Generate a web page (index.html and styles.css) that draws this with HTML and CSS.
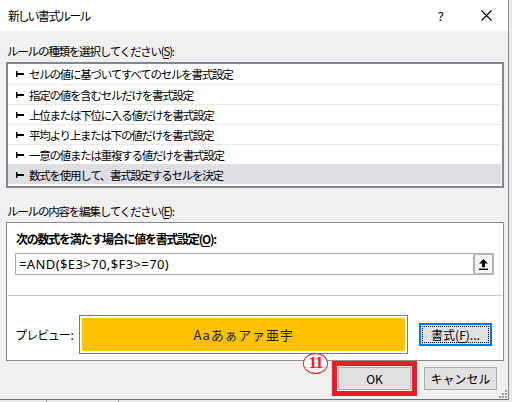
FILE: index.html
```html
<!DOCTYPE html>
<html lang="ja">
<head>
<meta charset="utf-8">
<title>新しい書式ルール</title>
<link rel="stylesheet" href="styles.css">
</head>
<body>
<div class="screen">
  <div class="dialog">
    <div class="titlebar">
      <span class="title">新しい書式ルール</span>
      <span class="help">?</span>
      <svg class="close" width="11" height="11" viewBox="0 0 11 11"><path d="M0.5 0.5L10.5 10.5M10.5 0.5L0.5 10.5" stroke="#000" stroke-width="1.1" fill="none"/></svg>
    </div>
    <div class="content">
      <div class="label label-first">ルールの種類を選択してください(<u>S</u>):</div>
      <ul class="rules">
        <li><svg class="mark" width="8" height="6" viewBox="0 0 8 6"><path d="M0 0h1.4v6H0zM1.4 2h6.6v2H1.4z" fill="#000"/></svg>セルの値に基づいてすべてのセルを書式設定</li>
        <li><svg class="mark" width="8" height="6" viewBox="0 0 8 6"><path d="M0 0h1.4v6H0zM1.4 2h6.6v2H1.4z" fill="#000"/></svg>指定の値を含むセルだけを書式設定</li>
        <li><svg class="mark" width="8" height="6" viewBox="0 0 8 6"><path d="M0 0h1.4v6H0zM1.4 2h6.6v2H1.4z" fill="#000"/></svg>上位または下位に入る値だけを書式設定</li>
        <li><svg class="mark" width="8" height="6" viewBox="0 0 8 6"><path d="M0 0h1.4v6H0zM1.4 2h6.6v2H1.4z" fill="#000"/></svg>平均より上または下の値だけを書式設定</li>
        <li><svg class="mark" width="8" height="6" viewBox="0 0 8 6"><path d="M0 0h1.4v6H0zM1.4 2h6.6v2H1.4z" fill="#000"/></svg>一意の値または重複する値だけを書式設定</li>
        <li class="selected"><svg class="mark" width="8" height="6" viewBox="0 0 8 6"><path d="M0 0h1.4v6H0zM1.4 2h6.6v2H1.4z" fill="#000"/></svg>数式を使用して、書式設定するセルを決定</li>
      </ul>
      <div class="label label-second">ルールの内容を編集してください(<u>E</u>):</div>
      <div class="group">
        <div class="group-title">次の数式を満たす場合に値を書式設定(<u>O</u>):</div>
        <div class="formula-row">
          <div class="formula">=AND($E3&gt;70,$F3&gt;=70)</div>
          <div class="collapse"><svg width="9" height="11" viewBox="0 0 9 11"><path d="M4.5 0L0 4.6h3v3.6h3V4.6h3z" fill="#000"/><rect x="0" y="9.6" width="9" height="1.4" fill="#000"/></svg></div>
        </div>
        <div class="separator"></div>
        <div class="preview-row">
          <span class="preview-label">プレビュー:</span>
          <div class="preview"><div class="preview-fill">Aaあぁアァ亜宇</div></div>
          <button class="btn format">書式(<u>F</u>)...</button>
        </div>
      </div>
      <div class="actions">
        <div class="ok-wrap">
          <span class="step">11</span>
          <button class="btn ok">OK</button>
        </div>
        <button class="btn cancel">キャンセル</button>
      </div>
    </div>
    <svg class="grip" width="9" height="9" viewBox="0 0 9 9"><g fill="#a0a0a0"><rect x="7" y="1" width="2" height="2"/><rect x="4" y="4" width="2" height="2"/><rect x="7" y="4" width="2" height="2"/><rect x="1" y="7" width="2" height="2"/><rect x="4" y="7" width="2" height="2"/><rect x="7" y="7" width="2" height="2"/></g></svg>
  </div>
</div>
</body>
</html>
```
FILE: styles.css
```css
html, body {
  margin: 0;
  padding: 0;
}
body {
  width: 512px;
  height: 402px;
  overflow: hidden;
  background: #e9e9e9;
  font-family: "Noto Sans CJK JP", "Noto Sans", sans-serif;
  font-size: 12px;
  line-height: 16px;
  color: #000;
  white-space: nowrap;
}
.screen {
  width: 512px;
  height: 402px;
  background:
    linear-gradient(#9a9a9a, #9a9a9a) 46px 400px / 1px 2px no-repeat,
    linear-gradient(#9a9a9a, #9a9a9a) 118px 400px / 1px 2px no-repeat,
    #e9e9e9;
}
.dialog {
  position: relative;
  width: 508px;
  height: 399px;
  background: #f0f0f0;
  border-right: 1px solid #8a8a8a;
  border-bottom: 1px solid #6e6e6e;
}
.titlebar {
  height: 31px;
  background: #fff;
  display: flex;
  align-items: center;
  padding-left: 8px;
}
.title {
  flex: 1;
  font-size: 12px;
  letter-spacing: -1.2px;
  font-feature-settings: "palt";
}
.help {
  width: 10px;
  font-size: 13px;
  margin-right: 33px;
  font-family: "Noto Sans", sans-serif;
}
.close {
  margin-right: 16px;
}
.content {
  padding: 0 4px 0 6px;
}
.label {
  padding-left: 1px;
  height: 16px;
  font-size: 11.5px;
  letter-spacing: -1.2px;
}
.label-first {
  margin-top: 12px;
  margin-bottom: 3px;
}
.label-second {
  margin-top: 15px;
  margin-bottom: 3px;
}
u {
  text-decoration: underline;
  text-underline-offset: 2px;
}
.rules {
  list-style: none;
  margin: 0;
  padding: 0 1px 2px 0;
  background: #fff;
  border: 2px solid #82868e;
  height: 120px;
  font-size: 11.5px;
  letter-spacing: -1.25px;
}
.rules li {
  box-sizing: border-box;
  height: 20px;
  display: flex;
  align-items: center;
  padding-left: 8px;
}
.rules li + li {
  border-top: 1px solid #e9e9ec;
}
.rules li.selected {
  background: #dedee3;
  border-top-color: #dedee3;
}
.mark {
  margin-right: 5px;
  flex: none;
}
.group {
  box-sizing: border-box;
  height: 139px;
  border: 1px solid #8c8c8c;
  background: #fff;
  padding-top: 8px;
}
.group-title {
  font-weight: bold;
  padding-left: 9px;
  height: 16px;
  letter-spacing: -1.25px;
}
.formula-row {
  display: flex;
  margin: 6px 9px 0 8px;
  height: 22px;
}
.formula {
  flex: 1;
  box-sizing: border-box;
  border: 1px solid #a8a8a8;
  border-right: none;
  padding-left: 3px;
  font-family: "Noto Sans", sans-serif;
  font-size: 13px;
  line-height: 20px;
  letter-spacing: 0.4px;
}
.collapse {
  box-sizing: border-box;
  width: 21px;
  border: 2px solid #b4b4b4;
  background: #f4f4f4;
  display: flex;
  align-items: center;
  justify-content: center;
}
.separator {
  height: 1px;
  background: #c6c6c6;
  margin: 20px 1px 0 1px;
}
.preview-row {
  display: flex;
  align-items: center;
  margin-top: 19px;
  padding-left: 9px;
}
.preview-label {
  width: 63px;
  flex: none;
  font-feature-settings: "palt";
}
.preview {
  box-sizing: border-box;
  width: 329px;
  height: 39px;
  border: 1px solid #7a7a7a;
  padding: 2px;
  background: #fff;
}
.preview-fill {
  height: 100%;
  background: #ffc000;
  display: flex;
  align-items: center;
  justify-content: center;
  font-size: 13px;
  letter-spacing: 0.8px;
  color: #222;
}
.btn {
  box-sizing: border-box;
  font-family: inherit;
  font-size: 12px;
  line-height: 16px;
  color: #000;
  background: #e1e1e1;
  border: 1px solid #adadad;
  padding: 0;
  margin: 0;
  height: 23px;
}
.format {
  position: relative;
  margin-left: 11px;
  width: 73px;
  border: 2px solid #0078d7;
}
.format::after {
  content: "";
  position: absolute;
  inset: 1px;
  border: 1px dotted #000;
}
.actions {
  display: flex;
  justify-content: flex-end;
  margin-top: 6px;
  padding-right: 7px;
}
.ok-wrap {
  position: relative;
  margin-right: 13px;
}
.ok {
  width: 73px;
  outline: 5px solid #ed1c24;
  outline-offset: 1px;
}
.cancel {
  width: 73px;
}
.step {
  position: absolute;
  left: -35px;
  top: -14px;
  box-sizing: border-box;
  width: 25px;
  height: 21px;
  border: 1.5px solid #ff1a1a;
  border-radius: 50%;
  background: #fff;
  color: #ff1a1a;
  font-family: "Liberation Serif", serif;
  font-weight: bold;
  font-size: 17px;
  line-height: 18px;
  text-align: center;
  letter-spacing: -1px;
}
.grip {
  position: absolute;
  right: 1px;
  bottom: 1px;
}
```
